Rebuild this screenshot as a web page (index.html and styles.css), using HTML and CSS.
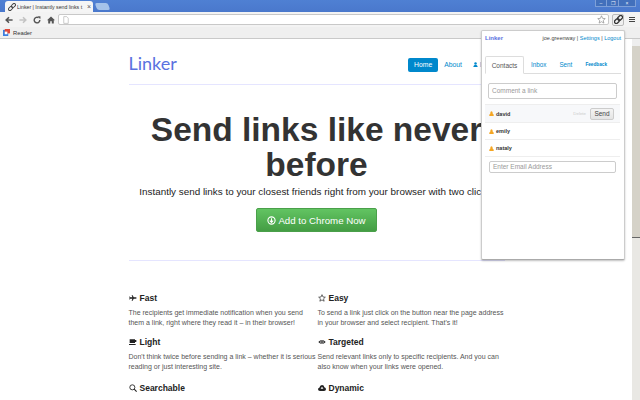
FILE: index.html
```html
<!DOCTYPE html>
<html lang="en">
<head>
<meta charset="utf-8">
<title>Linker</title>
<link rel="stylesheet" href="styles.css">
</head>
<body>
<div class="browser">
  <div class="tabstrip">
    <div class="tab">
      <svg class="tab-icon" viewBox="0 0 10 10"><g transform="rotate(-45 5 5)" fill="none" stroke="#444" stroke-width="1.2"><rect x="-.5" y="3.2" width="6" height="3.6" rx="1.8"/><rect x="4.5" y="3.2" width="6" height="3.6" rx="1.8"/></g></svg>
      <span class="tab-title">Linker | Instantly send links t</span>
      <span class="tab-close">×</span>
    </div>
    <div class="newtab"></div>
    <div class="winctrls"><span class="winbtn">–</span><span class="winbtn">❐</span><span class="winbtn winclose">×</span></div>
  </div>
  <div class="toolbar">
    <svg class="nav" viewBox="0 0 10 10"><path d="M9.5 5H2M5 1.5 1.5 5 5 8.5" fill="none" stroke="#555" stroke-width="2"/></svg>
    <svg class="nav" viewBox="0 0 10 10"><path d="M.5 5H8M5 1.5 8.5 5 5 8.5" fill="none" stroke="#c4c4c4" stroke-width="2"/></svg>
    <svg class="nav" viewBox="0 0 10 10"><path d="M8.5 5A3.5 3.5 0 1 1 7 2.2" fill="none" stroke="#555" stroke-width="1.8"/><path d="M6 0 9.5 .5 9 4Z" fill="#555"/></svg>
    <svg class="nav" viewBox="0 0 10 10"><path d="M5 .5 0 5.2H1.5V9.5H4V6.5H6V9.5H8.5V5.2H10Z" fill="#555"/></svg>
    <div class="omnibox">
      <svg class="pageicon" viewBox="0 0 8 10"><path d="M1 .5H5L7 2.5V9.5H1Z" fill="#fff" stroke="#aaa" stroke-width=".8"/></svg>
      <svg class="star" viewBox="0 0 12 12"><path d="M6 1 7.5 4.5 11 4.8 8.3 7.2 9.2 10.8 6 8.9 2.8 10.8 3.7 7.2 1 4.8 4.5 4.5Z" fill="#fff" stroke="#888" stroke-width=".9"/></svg>
    </div>
    <div class="extbtn"><svg viewBox="0 0 10 10"><g transform="rotate(-45 5 5)" fill="none" stroke="#333" stroke-width="1.4"><rect x="-.5" y="3" width="6" height="4" rx="2"/><rect x="4.5" y="3" width="6" height="4" rx="2"/></g></svg></div>
    <div class="menu"><i></i><i></i><i></i></div>
  </div>
  <div class="bookmarks">
    <svg class="bm-icon" viewBox="0 0 8 8"><rect x="0" y="1" width="6" height="7" fill="#3a7de0"/><rect x="2" y="0" width="6" height="5" fill="#e04a3a"/><rect x="2" y="3" width="3" height="3" fill="#fff"/></svg>
    <span>Reader</span>
  </div>
</div>

<div class="viewport">
  <main class="page">
    <div class="container">
      <header class="masthead">
        <div class="logo">Linker</div>
        <nav class="sitenav">
          <a class="pill">Home</a>
          <a>About</a>
          <a class="user"><svg viewBox="0 0 8 8"><circle cx="4" cy="2.3" r="2" fill="#08c"/><path d="M.5 8C.5 5.5 2 4.6 4 4.6S7.5 5.5 7.5 8Z" fill="#08c"/></svg>Log in</a>
        </nav>
      </header>
      <section class="hero">
        <h1>Send links like never before</h1>
        <p class="lead">Instantly send links to your closest friends right from your browser with two clicks.</p>
        <a class="cta"><svg viewBox="0 0 12 12"><circle cx="6" cy="6" r="4.8" fill="none" stroke="#fff" stroke-width="1.5"/><path d="M6 3V8.5M3.8 6.2 6 8.6 8.2 6.2" fill="none" stroke="#fff" stroke-width="1.4"/></svg>Add to Chrome Now</a>
      </section>
      <section class="features">
        <article>
          <h4><svg viewBox="0 0 12 10"><path d="M0 5H12L10 3.8H7.2L5 .5H4L5 3.8H2L1 2.6H.3L.9 5 .3 7.4H1L2 6.2H5L4 9.5H5L7.2 6.2H10L12 5Z" fill="#222"/></svg>Fast</h4>
          <p>The recipients get immediate notification when you send them a link, right where they read it – in their browser!</p>
        </article>
        <article>
          <h4><svg viewBox="0 0 12 12"><path d="M6 1 7.5 4.5 11 4.8 8.3 7.2 9.2 10.8 6 8.9 2.8 10.8 3.7 7.2 1 4.8 4.5 4.5Z" fill="none" stroke="#222"/></svg>Easy</h4>
          <p>To send a link just click on the button near the page address in your browser and select recipient. That's it!</p>
        </article>
        <article>
          <h4><svg viewBox="0 0 12 10"><path d="M1 1H9V6.5H1ZM9 2H11V5H9M0 8H10V9.5H0Z" fill="#222"/></svg>Light</h4>
          <p>Don't think twice before sending a link – whether it is serious reading or just interesting site.</p>
        </article>
        <article>
          <h4><svg viewBox="0 0 12 10"><path d="M.5 5Q6-1 11.5 5 6 11 .5 5Z" fill="#222"/><circle cx="6" cy="5" r="2.4" fill="#fff"/><circle cx="6" cy="5" r="1.4" fill="#222"/></svg>Targeted</h4>
          <p>Send relevant links only to specific recipients. And you can also know when your links were opened.</p>
        </article>
        <article class="lastrow">
          <h4><svg viewBox="0 0 12 12"><circle cx="5" cy="5" r="3.8" fill="none" stroke="#222" stroke-width="1.3"/><path d="M7.8 7.8 11.5 11.5" stroke="#222" stroke-width="1.6"/></svg>Searchable</h4>
          <p>You can search links sent to you and by you in the archive at any time.</p>
        </article>
        <article class="lastrow">
          <h4><svg viewBox="0 0 12 10"><path d="M3 9.5Q0 9.5 0 7 0 5 2 4.5 3 .5 6 .5 9 .5 9.6 4 12 4.5 12 7 12 9.5 9 9.5Z" fill="#222"/><path d="M6 3 3.8 6H8.2Z" fill="#fff"/></svg>Dynamic</h4>
          <p>Links update right away on both sides as soon as they are sent.</p>
        </article>
      </section>
    </div>
  </main>
  <div class="scrollbar">
    <div class="sb-arrow"></div>
    <div class="sb-thumb"></div>
  </div>
</div>

<aside class="popup">
  <div class="pop-head">
    <span class="pop-logo">Linker</span>
    <span class="pop-user">joe.greenway | <a>Settings</a> | <a>Logout</a></span>
  </div>
  <div class="pop-tabs">
    <a class="active">Contacts</a>
    <a>Inbox</a>
    <a>Sent</a>
    <a class="small">Feedback</a>
  </div>
  <div class="comment">Comment a link</div>
  <ul class="contacts">
    <li class="hot"><svg viewBox="0 0 8 8"><path d="M4 .3C5.2.3 5.8 1.5 5.8 3S6.5 5 7.5 5.6V8H.5V5.6C1.5 5 2.2 4.5 2.2 3S2.8.3 4 .3Z" fill="#f5a623"/></svg><b>david</b><span class="del">Delete</span><button class="send">Send</button></li>
    <li><svg viewBox="0 0 8 8"><path d="M4 .3C5.2.3 5.8 1.5 5.8 3S6.5 5 7.5 5.6V8H.5V5.6C1.5 5 2.2 4.5 2.2 3S2.8.3 4 .3Z" fill="#f5a623"/></svg><b>emily</b></li>
    <li><svg viewBox="0 0 8 8"><path d="M4 .3C5.2.3 5.8 1.5 5.8 3S6.5 5 7.5 5.6V8H.5V5.6C1.5 5 2.2 4.5 2.2 3S2.8.3 4 .3Z" fill="#f5a623"/></svg><b>nataly</b></li>
  </ul>
  <div class="email">Enter Email Address</div>
</aside>
</body>
</html>
```
FILE: styles.css
```css
* { box-sizing: border-box; }
html, body { margin: 0; height: 400px; overflow: hidden; background: #fff; font-family: "Liberation Sans", Arial, sans-serif; }
body { display: flex; flex-direction: column; }
a { text-decoration: none; color: #08c; }

.browser { flex: none; }
.tabstrip { height: 12px; background: linear-gradient(#4f80d3, #4a78cc); display: flex; align-items: flex-end; padding-left: 5px; }
.tab { width: 88px; height: 11px; background: #f5f5f5; border-radius: 3px 3px 0 0; display: flex; align-items: center; padding: 0 4px 0 3px; gap: 1px; }
.tab-icon { width: 8px; height: 8px; flex: none; }
.tab-title { font-size: 5.2px; color: #333; white-space: nowrap; overflow: hidden; width: 66px; flex: none; }
.tab-close { font-size: 7px; color: #555; line-height: 1; margin-left: 3px; }
.newtab { width: 13px; height: 7px; margin-left: 3px; margin-bottom: 2px; background: #a5c3ea; border-radius: 2px; transform: skewX(20deg); }
.winctrls { margin-left: auto; align-self: flex-start; display: flex; margin-right: 4px; }
.winbtn { width: 12px; height: 7px; font-size: 5px; line-height: 7px; text-align: center; color: #e8eef8; background: #4270bc; border: 1px solid #7ea0d8; border-top: 0; border-left-width: 0; }
.winbtn:first-child { border-left-width: 1px; }
.winclose { width: 17px; }
.toolbar { height: 15px; background: #f3f3f3; display: flex; align-items: center; padding-left: 5px; gap: 6px; }
.nav { width: 8px; height: 8px; flex: none; }
.omnibox { flex: 1; height: 11px; margin-left: -3px; background: #fff; border: 1px solid #c8c8c8; border-radius: 2px; display: flex; align-items: center; justify-content: space-between; padding: 0 2px 0 4px; }
.pageicon { width: 6px; height: 8px; }
.star { width: 9px; height: 9px; }
.extbtn { width: 12px; height: 12px; margin-left: -3px; border: 1px solid #bbb; border-radius: 2px; background: #f0f0f0; display: flex; align-items: center; justify-content: center; }
.extbtn svg { width: 9px; height: 9px; }
.menu { width: 6px; display: flex; flex-direction: column; gap: 1px; margin-right: 5px; margin-left: -1px; }
.menu i { display: block; height: 1px; background: #444; }
.bookmarks { height: 12px; background: #efefef; border-bottom: 1px solid #c9c9c9; display: flex; align-items: center; padding-left: 3px; gap: 3px; font-size: 5.8px; color: #333; }
.bm-icon { width: 7px; height: 7px; }

.viewport { flex: 1; min-height: 0; display: flex; }
.page { flex: 1; min-width: 0; overflow: hidden; }
.container { width: 375px; margin: 0 auto; }
.masthead { height: 46px; border-bottom: 1px solid #e5e5ff; display: flex; justify-content: space-between; padding-top: 12px; }
.logo { font-family: Lato, sans-serif; font-size: 18px; line-height: 24px; color: #5a72e0; }
.sitenav { display: flex; align-items: flex-start; gap: 1px; font-size: 6.8px; margin-top: 7px; white-space: nowrap; }
.sitenav a { padding: 0 5px; line-height: 14px; height: 14px; }
.sitenav .pill { background: #08c; color: #fff; border-radius: 2px; padding: 0 6px; }
.user svg { width: 5px; height: 5px; margin-right: 2px; }
.hero { height: 176px; border-bottom: 1px solid #e5e5ff; text-align: center; padding-top: 27px; margin-right: -1px; }
.hero h1 { margin: 0 -30px; font-size: 33.5px; line-height: 35px; color: #333; font-weight: 700; }
.lead { margin: 2px -40px 0; font-size: 9.9px; line-height: 16px; color: #222; white-space: nowrap; }
.cta { display: inline-flex; align-items: center; justify-content: center; gap: 2px; width: 121px; height: 24px; margin-top: 8px; color: #fff; font-size: 9.7px; background: linear-gradient(#62c462, #449d44); border: 1px solid #4aa04a; border-radius: 2px; }
.cta svg { width: 9px; height: 9px; }
.features { display: grid; grid-template-columns: 189px 186px; padding-top: 30px; }
.features h4 { margin: 0; font-size: 8.5px; line-height: 14px; color: #222; display: flex; align-items: center; gap: 3px; }
.features h4 svg { width: 8px; height: 8px; flex: none; }
.features p { margin: 3px 0 7px; font-size: 7px; line-height: 10px; color: #555; }
.lastrow { margin-top: 2px; }

.scrollbar { width: 8px; flex: none; background: #e9e8e4; }
.sb-arrow { height: 7px; background: #eee; }
.sb-thumb { height: 192px; background: #d5d2c8; border-bottom: 1px solid #666; }

.popup { position: absolute; left: 481px; top: 30px; width: 144px; height: 230px; background: #fff; border: 1px solid #ccc; border-bottom-color: #aaa; border-radius: 2px; box-shadow: 0 1px 2px rgba(0,0,0,.25); padding: 0 3px; font-size: 5.5px; }
.pop-head { display: flex; justify-content: space-between; align-items: center; height: 14px; }
.pop-logo { color: #5a72e0; font-weight: 700; font-size: 6px; }
.pop-user { color: #444; white-space: nowrap; }
.pop-tabs { display: flex; align-items: center; gap: 13px; height: 18px; margin-top: 11px; border-bottom: 1px solid #ddd; font-size: 6.3px; }
.pop-tabs .active { width: 39px; height: 18px; line-height: 18px; text-align: center; color: #555; font-size: 6.5px; background: #fff; border: 1px solid #ddd; border-bottom-color: #fff; border-radius: 2px 2px 0 0; margin-bottom: -1px; margin-right: -6px; }
.pop-tabs .small { font-size: 4.7px; font-weight: 700; }
.comment { height: 16px; margin: 9px 4px 5px 3px; border: 1px solid #ccc; border-radius: 2px; padding: 3px; font-size: 6.5px; line-height: 8px; color: #999; }
.contacts { list-style: none; margin: 0 1px 0 0; padding: 0; border-bottom: 1px solid #eee; }
.contacts li { height: 17px; border-top: 1px solid #eee; display: flex; align-items: center; padding-left: 4px; gap: 2px; color: #333; font-size: 5.5px; }
.contacts li svg { width: 5px; height: 5px; }
.contacts b { font-weight: 700; }
.contacts .hot { height: 18px; background: #f7f8fa; padding-right: 6px; }
.del { margin-left: auto; margin-right: 2px; color: #ccc; font-size: 4.4px; }
.send { height: 12px; width: 24px; padding: 0; font: 6.5px "Liberation Sans", sans-serif; color: #444; background: linear-gradient(#f4f4f4, #e4e4e4); border: 1px solid #ccc; border-radius: 2px; }
.email { height: 12px; margin: 4px 5px 0 4px; border: 1px solid #ccc; border-radius: 2px; padding: 0 3px; line-height: 10px; font-size: 6.5px; color: #999; }
```
